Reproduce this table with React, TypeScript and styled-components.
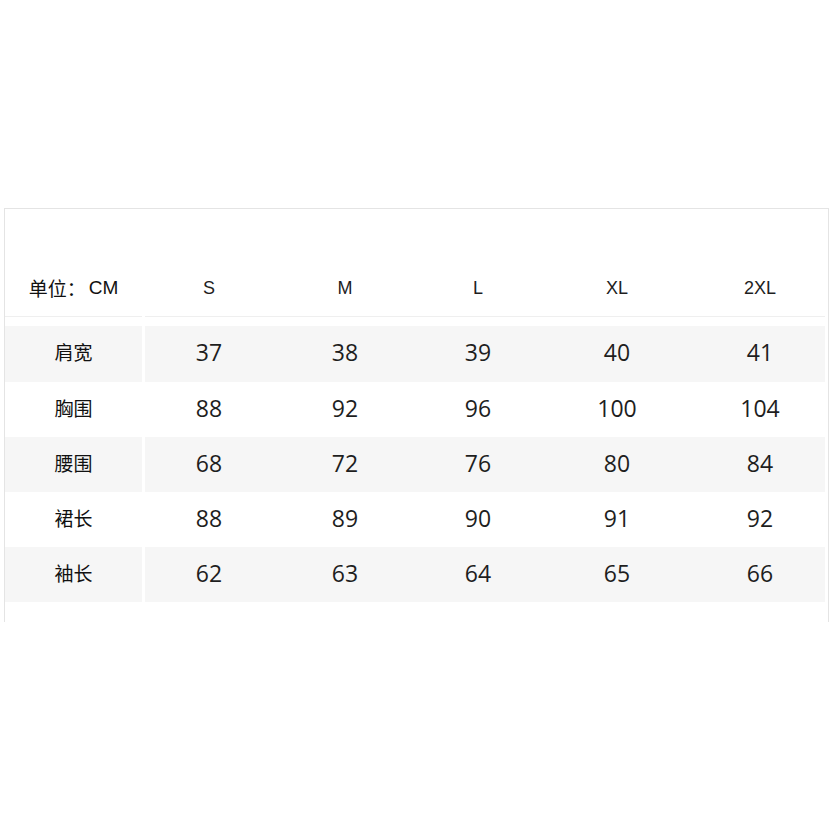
import * as React from 'react'
import styled, { createGlobalStyle } from 'styled-components'

const GlobalStyle = createGlobalStyle`
  html, body {
    margin: 0;
    padding: 0;
    background: #ffffff;
  }

  body {
    font-family: "Open Sans", "Noto Sans CJK SC", sans-serif;
    color: #222222;
  }
`

const Page = styled.div`
  width: 830px;
  height: 830px;
  padding-top: 208px;
  padding-left: 4px;
  box-sizing: border-box;
`

const Frame = styled.div`
  width: 825px;
  box-sizing: border-box;
  border-top: 1px solid #e4e4e4;
  border-left: 1px solid #e4e4e4;
  border-right: 1px solid #e4e4e4;
  padding: 0 3px 20px 0;
`

const Row = styled.div<{ $header?: boolean; $shaded?: boolean }>`
  display: flex;
  gap: 3px;
  height: ${props => props.$header ? '108px' : '55px'};
  margin-bottom: ${props => props.$header ? '9px' : '0'};

  & > * {
    background-color: ${props => props.$shaded ? '#f6f6f6' : '#ffffff'};
    border-bottom: ${props => props.$header ? '1px solid #efefef' : 'none'};
    align-items: ${props => props.$header ? 'flex-end' : 'center'};
    padding-bottom: ${props => props.$header ? '14px' : '4px'};
  }

  &.first {
    height: 56px;
  }
`

const LabelCell = styled.div`
  width: 137px;
  box-sizing: border-box;
  display: flex;
  justify-content: center;
  font-family: "Noto Sans CJK SC", "Open Sans", sans-serif;
  font-size: 19px;
  line-height: 28px;
  color: #111111;
`

const Unit = styled.span`
  font-family: "Liberation Sans", sans-serif;
  font-size: 19px;
  margin-left: 3px;
`

const DataCell = styled.div`
  flex: 1;
  box-sizing: border-box;
  display: grid;
  grid-template-columns: 128px 144px 122px 156px 130px;
`

const Value = styled.div<{ $header?: boolean }>`
  text-align: center;
  font-family: ${props => props.$header ? '"Liberation Sans", sans-serif' : '"Open Sans", sans-serif'};
  font-size: ${props => props.$header ? '18px' : '23px'};
  line-height: 28px;
  color: #1e1e1e;
`

const sizes = ['S', 'M', 'L', 'XL', '2XL']

const rows: { label: string; values: number[] }[] = [
  { label: '肩宽', values: [37, 38, 39, 40, 41] },
  { label: '胸围', values: [88, 92, 96, 100, 104] },
  { label: '腰围', values: [68, 72, 76, 80, 84] },
  { label: '裙长', values: [88, 89, 90, 91, 92] },
  { label: '袖长', values: [62, 63, 64, 65, 66] }
]

export default function App (): React.ReactElement {
  return (
    <Page>
      <GlobalStyle />
      <Frame>
        <Row $header>
          <LabelCell>单位：<Unit>CM</Unit></LabelCell>
          <DataCell>
            {sizes.map(size => <Value key={size} $header>{size}</Value>)}
          </DataCell>
        </Row>
        {rows.map((row, i) => (
          <Row key={row.label} $shaded={i % 2 === 0} className={i === 0 ? 'first' : ''}>
            <LabelCell>{row.label}</LabelCell>
            <DataCell>
              {row.values.map((v, j) => <Value key={j}>{v}</Value>)}
            </DataCell>
          </Row>
        ))}
      </Frame>
    </Page>
  )
}
